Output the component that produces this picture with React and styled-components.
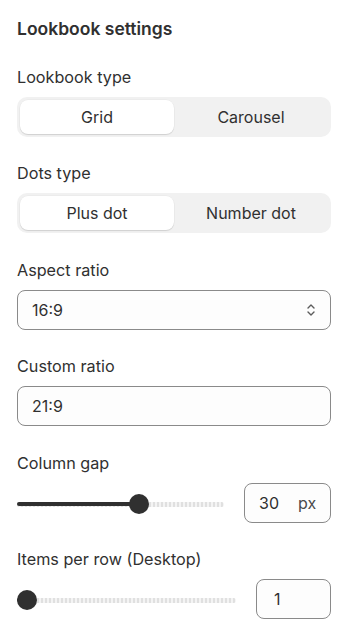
import React from 'react'
import styled, { createGlobalStyle } from 'styled-components'

const Global = createGlobalStyle`
  body{margin:0;background:#ffffff;font-family:Inter,"Noto Sans",sans-serif;color:#303030;}
`

const Panel = styled.div`
  display:flex;
  flex-direction:column;
  gap:26.4px;
  padding:19px 20px 20px 17px;
`
const Heading = styled.div`
  font-size:17.5px;
  font-weight:600;
  line-height:20px;
  color:#303030;
  margin-bottom:1.6px;
`
const Field = styled.div`
  display:flex;
  flex-direction:column;
  gap:10px;
`
const Label = styled.div`
  font-size:16.2px;
  line-height:21px;
  margin-bottom:-1px;
  color:#303030;
`
const Segmented = styled.div`
  display:grid;
  grid-template-columns:1fr 1fr;
  height:40px;
  padding:3px;
  box-sizing:border-box;
  background:#f1f1f1;
  border-radius:10px;
`
const Segment = styled.div`
  display:flex;
  align-items:center;
  justify-content:center;
  font-size:16px;
  color:#303030;
  border-radius:8px;
  background:${p => p.active ? '#ffffff' : 'transparent'};
  box-shadow:${p => p.active ? '0 1px 1px rgba(0,0,0,0.12), 0 0 0 0.5px rgba(0,0,0,0.04)' : 'none'};
`
const Box = styled.div`
  display:flex;
  align-items:center;
  justify-content:space-between;
  height:40px;
  box-sizing:border-box;
  border:1px solid #8a8a8a;
  border-radius:8px;
  background:#fdfdfd;
  padding:0 14px 0 14px;
  font-size:16px;
  color:#303030;
  width:${p => p.width ? p.width + 'px' : 'auto'};
  flex-shrink:0;
`
const Suffix = styled.span`
  color:#4a4a4a;
  margin-left:19px;
`
const SliderRow = styled.div`
  display:flex;
  align-items:center;
  gap:20px;
`
const Track = styled.div`
  position:relative;
  flex:1;
  height:20px;
  margin-top:3px;
`
const Rail = styled.div`
  position:absolute;
  left:0;right:0;top:8px;
  height:5px;
  border-radius:3px;
  background:repeating-linear-gradient(90deg,#e0e0e0 0 2.5px,#f4f4f4 2.5px 4px);
`
const Fill = styled.div`
  position:absolute;
  left:0;top:8px;
  height:4px;
  border-radius:2px;
  background:#303030;
`
const Thumb = styled.div`
  position:absolute;
  top:0;
  width:20px;
  height:20px;
  margin-left:-10px;
  border-radius:50%;
  background:#303030;
`

const Slider = ({ pos }) => (
  <Track>
    <Rail />
    <Fill style={{ width: pos + 'px' }} />
    <Thumb style={{ left: pos + 'px' }} />
  </Track>
)

const Chevrons = () => (
  <svg width="10" height="14" viewBox="0 0 10 14" fill="none" stroke="#5c5c5c" strokeWidth="1.4" strokeLinecap="round" strokeLinejoin="round">
    <path d="M2 5 L5 2 L8 5" />
    <path d="M2 9 L5 12 L8 9" />
  </svg>
)

export default function App() {
  return (
    <>
      <Global />
      <Panel>
        <Heading>Lookbook settings</Heading>
        <Field>
          <Label>Lookbook type</Label>
          <Segmented>
            <Segment active>Grid</Segment>
            <Segment>Carousel</Segment>
          </Segmented>
        </Field>
        <Field>
          <Label>Dots type</Label>
          <Segmented>
            <Segment active>Plus dot</Segment>
            <Segment>Number dot</Segment>
          </Segmented>
        </Field>
        <Field>
          <Label>Aspect ratio</Label>
          <Box><span>16:9</span><Chevrons /></Box>
        </Field>
        <Field>
          <Label>Custom ratio</Label>
          <Box><span>21:9</span></Box>
        </Field>
        <Field>
          <Label>Column gap</Label>
          <SliderRow>
            <Slider pos={122} />
            <Box width={87}><span>30</span><Suffix>px</Suffix></Box>
          </SliderRow>
        </Field>
        <Field>
          <Label>Items per row (Desktop)</Label>
          <SliderRow>
            <Slider pos={10} />
            <Box width={75} style={{ justifyContent: 'flex-start', paddingLeft: 17 }}><span>1</span></Box>
          </SliderRow>
        </Field>
      </Panel>
    </>
  )
}
